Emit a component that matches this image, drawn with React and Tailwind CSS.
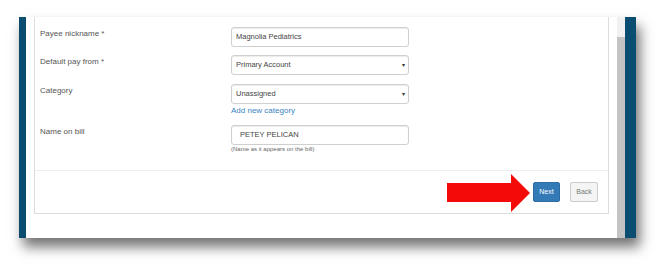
import React from 'react';

const fields = [
  { label: 'Payee nickname *', value: 'Magnolia Pediatrics', select: false },
  { label: 'Default pay from *', value: 'Primary Account', select: true },
  { label: 'Category', value: 'Unassigned', select: true, link: 'Add new category' },
];

const Field = ({ value, select, caps }) => (
  <div className="relative w-[178px] h-[20px] border border-[#cfcfcf] rounded-[3px] bg-white shadow-[inset_0_1px_1px_rgba(0,0,0,0.08)] flex items-center">
    <span className={`text-[7.5px] text-[#444] ${caps ? 'pl-[8px] text-[#333]' : 'pl-[4px]'}`}>{value}</span>
    {select && <span className="absolute right-[3px] top-[5px] text-[6px] text-[#333]">▾</span>}
  </div>
);

const App = () => {
  return (
    <div className="w-[668px] h-[266px] bg-white overflow-hidden relative pt-[17px] pl-[19px] font-['Liberation_Sans',Arial,sans-serif]">
      {/* fenêtre */}
      <div className="flex w-[617px] h-[221px] shadow-[4px_9px_12px_rgba(0,0,0,0.55)]">
        <div className="w-[7px] bg-[#0b4d70]" />
        <div className="flex-1 bg-white px-[8px]">
          <div className="h-[197px] border-x border-b border-[#dddddd] flex flex-col">
            {/* formulaire */}
            <div className="h-[153px] pt-[10px] flex flex-col">
              {fields.map((f, i) => (
                <div key={i} className={`flex ${i === 0 ? 'mb-[8px]' : 'mb-[9px]'}`}>
                  <div className="w-[196px] pl-[5px] pt-[1px] text-[8px] leading-[11px] text-[#555]">{f.label}</div>
                  <div>
                    <Field value={f.value} select={f.select} />
                    {f.link && (
                      <div className="text-[8px] leading-[11px] text-[#3a84c4] mt-[1px]">{f.link}</div>
                    )}
                  </div>
                </div>
              ))}
              <div className="flex">
                <div className="w-[196px] pl-[5px] pt-[1px] text-[8px] leading-[11px] text-[#555]">Name on bill</div>
                <div>
                  <Field value="PETEY PELICAN" caps />
                  <div className="text-[6px] leading-[9px] text-[#666]">(Name as it appears on the bill)</div>
                </div>
              </div>
            </div>
            {/* pied */}
            <div className="flex-1 border-t border-[#eeeeee] flex justify-end items-start pt-[11px] pr-[10px] gap-[10px]">
              <button className="w-[27px] h-[20px] bg-[#337ab7] border border-[#2e6da4] rounded-[2px] text-white text-[7px]">Next</button>
              <button className="w-[28px] h-[20px] bg-[#f4f4f4] border border-[#cccccc] rounded-[2px] text-[#777] text-[7px]">Back</button>
            </div>
          </div>
        </div>
        {/* barre de défilement */}
        <div className="w-[8px] bg-[#f1f1f1] flex flex-col">
          <div className="h-[20px]" />
          <div className="flex-1 bg-[#c4c4c4]" />
        </div>
        <div className="w-[11px] bg-[#0b4d70]" />
      </div>

      {/* flèche rouge */}
      <svg className="absolute left-[447px] top-[174px]" width="84" height="39" viewBox="0 0 84 39">
        <polygon points="0,9 64,9 64,0 83,19 64,38 64,28 0,28" fill="#f50a0a" />
      </svg>
    </div>
  );
};

export default App;
